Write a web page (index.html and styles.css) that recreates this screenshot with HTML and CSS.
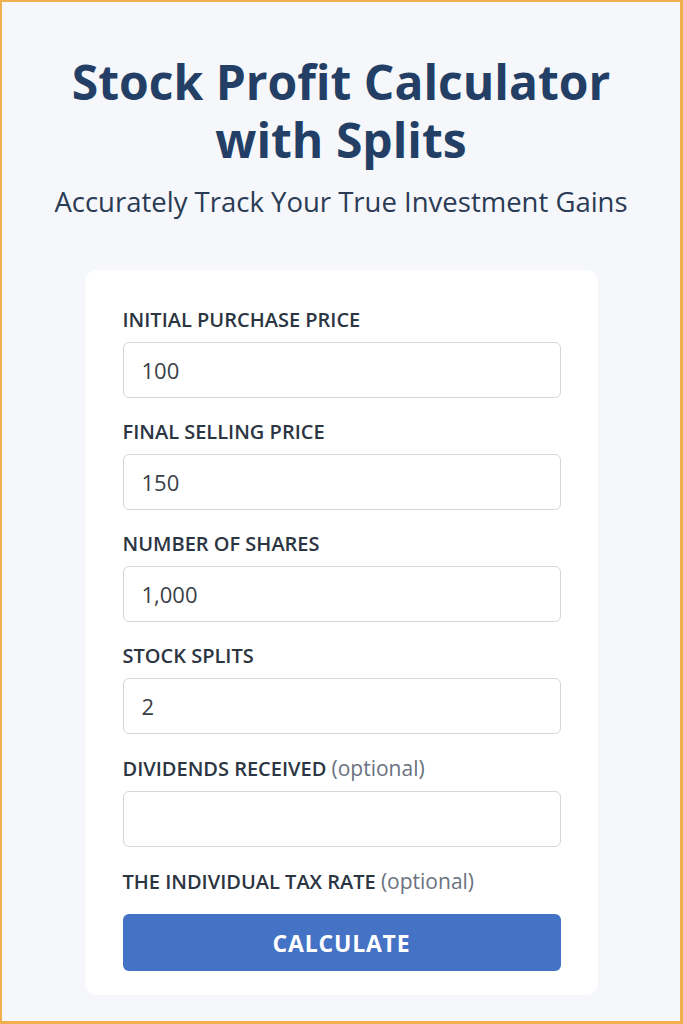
FILE: index.html
```html
<!DOCTYPE html>
<html lang="en">
<head>
<meta charset="utf-8">
<title>Stock Profit Calculator with Splits</title>
<link rel="stylesheet" href="styles.css">
</head>
<body>
<div class="page">
  <header class="hero">
    <h1 class="title">Stock Profit Calculator<br>with Splits</h1>
    <p class="subtitle">Accurately Track Your True Investment Gains</p>
  </header>
  <form class="card">
    <div class="field">
      <label class="label">INITIAL PURCHASE PRICE</label>
      <div class="input">100</div>
    </div>
    <div class="field">
      <label class="label">FINAL SELLING PRICE</label>
      <div class="input">150</div>
    </div>
    <div class="field">
      <label class="label">NUMBER OF SHARES</label>
      <div class="input">1,000</div>
    </div>
    <div class="field">
      <label class="label">STOCK SPLITS</label>
      <div class="input">2</div>
    </div>
    <div class="field">
      <label class="label">DIVIDENDS RECEIVED <span class="opt">(optional)</span></label>
      <div class="input"></div>
    </div>
    <div class="field last">
      <label class="label">THE INDIVIDUAL TAX RATE <span class="opt">(optional)</span></label>
    </div>
    <button type="button" class="btn">CALCULATE</button>
  </form>
</div>
</body>
</html>
```
FILE: styles.css
```css
* { box-sizing: border-box; }
html, body { margin: 0; padding: 0; }
body {
  background: #f5f6fa;
  font-family: "Open Sans", "Liberation Sans", sans-serif;
}
.page {
  min-height: 1024px;
  border: 2px solid #f0b04e;
  border-bottom-width: 3px;
  border-right-width: 3px;
  background: #f6f7fb;
  display: flex;
  flex-direction: column;
  align-items: center;
  padding-top: 51px;
}
.hero { text-align: center; }
.title {
  margin: 0;
  font-size: 48px;
  line-height: 58px;
  font-weight: 700;
  color: #233f66;
  letter-spacing: 0;
}
.subtitle {
  margin: 16px 0 0;
  font-size: 27.5px;
  line-height: 34px;
  color: #2a3b55;
  letter-spacing: 0;
}
.card {
  margin-top: 51px;
  width: 513px;
  background: #ffffff;
  border-radius: 12px;
  padding: 38px 37px 24px 38px;
  display: flex;
  flex-direction: column;
}
.field { margin-bottom: 22px; }
.field.last { margin-bottom: 20px; }
.label {
  display: block;
  font-size: 20px;
  line-height: 24px;
  font-weight: 600;
  color: #2c3542;
  margin-bottom: 10px;
}
.field.last .label { margin-bottom: 0; }
.opt { font-weight: 400; font-size: 21px; color: #6b7280; }
.input {
  height: 56px;
  border: 1px solid #d3d6dc;
  border-radius: 6px;
  background: #fff;
  padding: 0 18px;
  display: flex;
  align-items: center;
  font-size: 22px;
  color: #3a3f47;
}
.btn {
  height: 57px;
  border: 0;
  border-radius: 6px;
  background: #4472c4;
  color: #fff;
  font-family: inherit;
  font-size: 23px;
  font-weight: 700;
  letter-spacing: 0.8px;
}
```
